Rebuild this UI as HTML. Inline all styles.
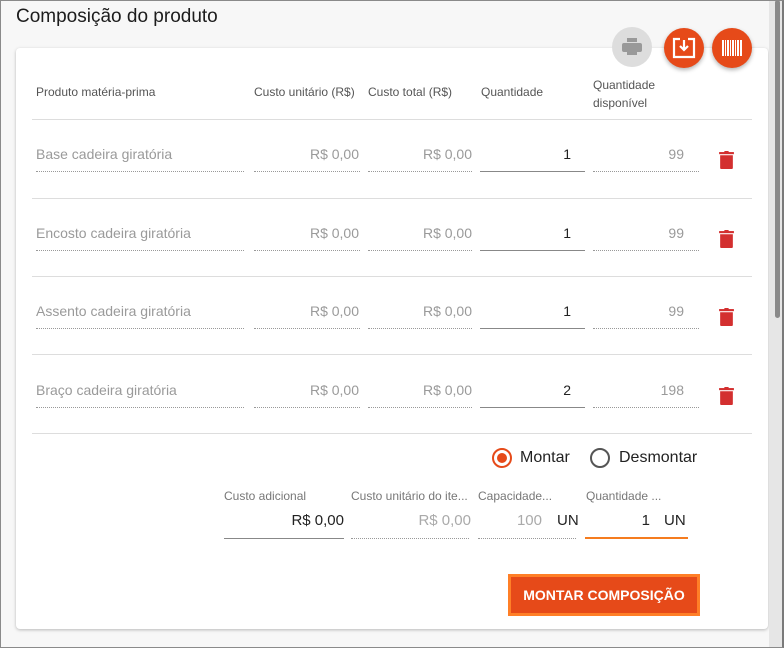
<!DOCTYPE html>
<html><head><meta charset="utf-8"><style>
*{margin:0;padding:0;box-sizing:border-box}
body{width:784px;height:648px;overflow:hidden;background:#f7f7f7;font-family:"Liberation Sans",sans-serif;position:relative}
.a{position:absolute}
.t{font-size:19px;color:#1c1c1c;left:16px;top:6px}
.card{left:16px;top:48px;width:752px;height:581px;background:#fff;border-radius:4px;box-shadow:0 1px 3px rgba(0,0,0,.25)}
.h{font-size:12px;color:#555}
.hl{height:1px;background:#ddd;left:32px;width:720px}
.v{font-size:14px;color:#9a9a9a}
.dot{height:0;border-bottom:1px dotted #999}
.sol{height:1px;background:#888}
.q{font-size:14px;color:#222}
.tr{width:15px;height:18px}
.fab{width:40px;height:40px;border-radius:50%}
</style></head><body>
<div class="a t">Composição do produto</div>
<div class="a card"></div>
<div class="a fab" style="left:612px;top:27px;background:#ddd"></div>
<svg class="a" style="left:622px;top:38px" width="20" height="18" viewBox="0 0 20 18"><rect x="5" y="0" width="10" height="4" fill="#999"/><rect x="0" y="5" width="20" height="9" rx="2" fill="#999"/><rect x="5" y="11" width="10" height="6" fill="#999"/></svg>
<div class="a fab" style="left:664px;top:28px;background:#e64a19;box-shadow:0 2px 4px rgba(0,0,0,.3)"></div>
<svg class="a" style="left:672px;top:37px" width="24" height="22" viewBox="0 0 24 22"><path d="M8 2H2v18h20V2h-6" fill="none" stroke="#fff" stroke-width="2.2"/><path d="M12 3v10M8 9l4 4 4-4" fill="none" stroke="#fff" stroke-width="2.2"/></svg>
<div class="a fab" style="left:712px;top:28px;background:#e64a19;box-shadow:0 2px 4px rgba(0,0,0,.3)"></div>
<svg class="a" style="left:722px;top:40px" width="20" height="16" viewBox="0 0 20 16" fill="#fff"><rect x="0" y="0" width="2" height="16"/><rect x="3" y="0" width="1" height="16"/><rect x="5" y="0" width="2" height="16"/><rect x="8" y="0" width="1" height="16"/><rect x="10" y="0" width="2" height="16"/><rect x="13" y="0" width="1" height="16"/><rect x="15" y="0" width="2" height="16"/><rect x="18" y="0" width="2" height="16"/></svg>

<div class="a h" style="left:36px;top:85px">Produto matéria-prima</div>
<div class="a h" style="left:254px;top:85px">Custo unitário (R$)</div>
<div class="a h" style="left:368px;top:85px">Custo total (R$)</div>
<div class="a h" style="left:481px;top:85px">Quantidade</div>
<div class="a h" style="left:593px;top:76px;line-height:18px">Quantidade<br>disponível</div>
<div class="a hl" style="top:119px"></div>

<div id="rows"></div>
<script>
var names=["Base cadeira giratória","Encosto cadeira giratória","Assento cadeira giratória","Braço cadeira giratória"];
var q=["1","1","1","2"],d=["99","99","99","198"];
var h="";
for(var i=0;i<4;i++){var y=[146,225,303,382][i];var ly=[171,250,328,407][i];
h+='<div class="a v" style="left:36px;top:'+y+'px">'+names[i]+'</div>';
h+='<div class="a dot" style="left:36px;width:208px;top:'+ly+'px"></div>';
h+='<div class="a v" style="left:250px;width:109px;text-align:right;top:'+y+'px">R$ 0,00</div>';
h+='<div class="a dot" style="left:254px;width:106px;top:'+ly+'px"></div>';
h+='<div class="a v" style="left:368px;width:104px;text-align:right;top:'+y+'px">R$ 0,00</div>';
h+='<div class="a dot" style="left:368px;width:104px;top:'+ly+'px"></div>';
h+='<div class="a q" style="left:480px;width:91px;text-align:right;top:'+y+'px">'+q[i]+'</div>';
h+='<div class="a sol" style="left:480px;width:105px;top:'+ly+'px"></div>';
h+='<div class="a v" style="left:593px;width:91px;text-align:right;top:'+y+'px">'+d[i]+'</div>';
h+='<div class="a dot" style="left:593px;width:106px;top:'+ly+'px"></div>';
h+='<svg class="a tr" style="left:719px;top:'+(y+5)+'px" viewBox="0 0 14 17"><rect x="0" y="1" width="14" height="2" fill="#d32f2f"/><rect x="5" y="0" width="4" height="2" fill="#d32f2f"/><path d="M1 4h12v12a1 1 0 0 1-1 1H2a1 1 0 0 1-1-1z" fill="#d32f2f"/></svg>';
h+='<div class="a hl" style="top:'+[198,276,354,433][i]+'px"></div>';}
document.getElementById("rows").innerHTML=h;
</script>

<div class="a" style="left:492px;top:448px;width:20px;height:20px;border:2px solid #e64a19;border-radius:50%"></div>
<div class="a" style="left:497px;top:453px;width:10px;height:10px;background:#e64a19;border-radius:50%"></div>
<div class="a" style="left:520px;top:449px;font-size:16px;color:#222">Montar</div>
<div class="a" style="left:590px;top:448px;width:20px;height:20px;border:2px solid #555;border-radius:50%"></div>
<div class="a" style="left:619px;top:449px;font-size:16px;color:#222">Desmontar</div>

<div class="a h" style="left:224px;top:489px;color:#777">Custo adicional</div>
<div class="a h" style="left:351px;top:489px;color:#777">Custo unitário do ite...</div>
<div class="a h" style="left:478px;top:489px;color:#777">Capacidade...</div>
<div class="a h" style="left:586px;top:489px;color:#777">Quantidade ...</div>
<div class="a" style="left:224px;width:120px;text-align:right;top:512px;font-size:15px;color:#222">R$ 0,00</div>
<div class="a sol" style="left:224px;width:120px;top:538px"></div>
<div class="a" style="left:351px;width:120px;text-align:right;top:512px;font-size:15px;color:#aaa">R$ 0,00</div>
<div class="a dot" style="left:351px;width:118px;top:538px"></div>
<div class="a" style="left:478px;width:64px;text-align:right;top:512px;font-size:15px;color:#aaa">100</div>
<div class="a" style="left:557px;top:512px;font-size:15px;color:#222">UN</div>
<div class="a dot" style="left:478px;width:98px;top:538px"></div>
<div class="a" style="left:586px;width:64px;text-align:right;top:512px;font-size:15px;color:#222">1</div>
<div class="a" style="left:664px;top:512px;font-size:15px;color:#222">UN</div>
<div class="a" style="left:585px;width:103px;top:537px;height:2px;background:#f57c1f"></div>

<div class="a" style="left:508px;top:574px;width:192px;height:42px;background:#e64a19;border:3px solid #ff7f27;color:#fff;font-size:14px;font-weight:bold;text-align:center;line-height:36px">MONTAR COMPOSIÇÃO</div>

<div class="a" style="left:769px;top:0;width:13px;height:648px;background:#e6e6e6"></div>
<div class="a" style="left:775px;top:0;width:5px;height:318px;background:#8a8a8a;border-radius:3px"></div>
<div class="a" style="left:0;top:0;width:784px;height:648px;border:1px solid #8a8a8a;border-right:2px solid #7a7a7a"></div>
</body></html>
